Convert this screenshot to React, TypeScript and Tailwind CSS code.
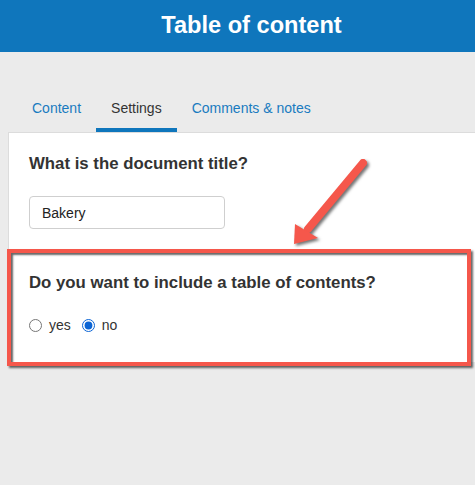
import { useState } from "react"

const tabs = ["Content", "Settings", "Comments & notes"]

function Arrow() {
  return (
    <svg
      className="absolute left-[280px] top-[150px] pointer-events-none"
      width="100"
      height="100"
      viewBox="0 0 100 100"
      style={{ filter: "drop-shadow(2px 2px 1.5px rgba(0,0,0,0.55))" }}
    >
      <line x1="83" y1="13" x2="28" y2="79" stroke="#f5574b" strokeWidth="8" strokeLinecap="round" />
      <polygon points="15,74 14,94 38,88" fill="#f5574b" />
    </svg>
  )
}

export default function App() {
  const [active, setActive] = useState(1)
  const [toc, setToc] = useState("no")
  const [title, setTitle] = useState("Bakery")

  return (
    <div className="relative min-h-[485px] w-full bg-[#ebebeb] font-['Liberation_Sans',Arial,sans-serif] text-[#333]">
      {/* Header */}
      <div className="flex h-[52px] items-center justify-center bg-[#0f76bc] pl-[28px]">
        <h1 className="text-[23.6px] font-bold text-white">Table of content</h1>
      </div>

      {/* Tabs */}
      <div className="mt-[46px] flex pl-[17px]">
        {tabs.map((t, i) => (
          <button
            key={t}
            onClick={() => setActive(i)}
            className={
              "border-b-4 px-[15px] pb-[10px] text-[14px] leading-[20px] " +
              (i === active ? "border-[#0f76bc] text-[#333]" : "border-transparent text-[#1a7bc0]")
            }
          >
            {t}
          </button>
        ))}
      </div>

      {/* Card */}
      <div className="ml-[8px] border-l border-t border-[#dcdcdc] bg-white">
        <div className="px-[20px] pb-[21px] pt-[21px]">
          <h2 className="text-[16.8px] font-bold leading-[20px]">What is the document title?</h2>
          <input
            value={title}
            onChange={(e) => setTitle(e.target.value)}
            className="mt-[22px] h-[33px] w-[196px] rounded-[4px] border border-[#cfcfcf] px-[12px] text-[14px] text-[#222] outline-none"
          />
        </div>
        <div className="mx-[10px] mr-[10px] h-px bg-[#dddddd]" />

        <div className="relative px-[20px] pb-[29px] pt-[22px]">
          <h2 className="text-[16.8px] font-bold leading-[20px]">Do you want to include a table of contents?</h2>
          <div className="mt-[24px] flex h-[16px] items-center text-[14px] text-[#333]">
            <label className="flex items-center">
              <input
                type="radio"
                name="toc"
                checked={toc === "yes"}
                onChange={() => setToc("yes")}
                className="m-0 h-[13px] w-[13px] accent-[#0b64d4]"
              />
              <span className="ml-[7px]">yes</span>
            </label>
            <label className="ml-[11px] flex items-center">
              <input
                type="radio"
                name="toc"
                checked={toc === "no"}
                onChange={() => setToc("no")}
                className="m-0 h-[13px] w-[13px] accent-[#0b64d4]"
              />
              <span className="ml-[7px]">no</span>
            </label>
          </div>
          {/* highlight annotation */}
          <div className="pointer-events-none absolute -bottom-[4px] -left-[2px] right-[4px] -top-[2px] border-4 border-[#f5574b] shadow-[2px_2px_2px_rgba(0,0,0,0.6),inset_2px_2px_2px_rgba(0,0,0,0.6)]" />
        </div>
      </div>

      <Arrow />
    </div>
  )
}
